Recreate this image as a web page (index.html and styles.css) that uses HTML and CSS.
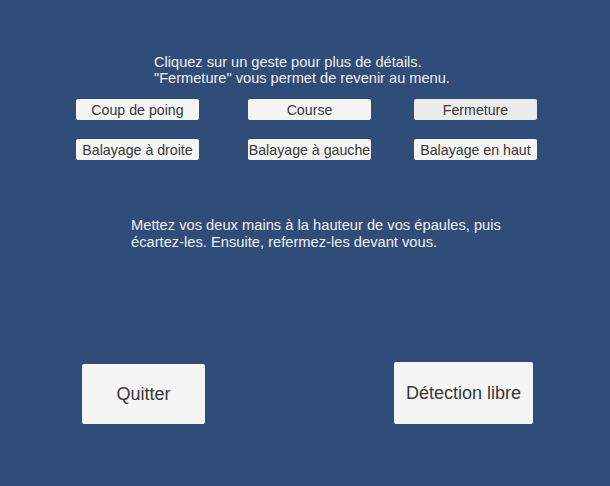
FILE: index.html
```html
<!DOCTYPE html>
<html lang="fr">
<head>
<meta charset="utf-8">
<title>Gestes</title>
<link rel="stylesheet" href="styles.css">
</head>
<body>
<div class="screen">
  <div class="intro">
    <div>Cliquez sur un geste pour plus de détails.</div>
    <div>"Fermeture" vous permet de revenir au menu.</div>
  </div>
  <div class="gestures">
    <button class="btn">Coup de poing</button>
    <button class="btn">Course</button>
    <button class="btn btn-active">Fermeture</button>
    <button class="btn">Balayage à droite</button>
    <button class="btn">Balayage à gauche</button>
    <button class="btn">Balayage en haut</button>
  </div>
  <p class="description">Mettez vos deux mains à la hauteur de vos épaules, puis<br>écartez-les. Ensuite, refermez-les devant vous.</p>
  <div class="actions">
    <button class="big-btn quit">Quitter</button>
    <button class="big-btn free">Détection libre</button>
  </div>
</div>
</body>
</html>
```
FILE: styles.css
```css
html, body {
  margin: 0;
  padding: 0;
}
body {
  background: #304d7a;
  font-family: "Liberation Sans", Arial, sans-serif;
}
.screen {
  width: 610px;
  height: 486px;
  overflow: hidden;
  background: #304d7a;
  color: #f0f0f0;
  padding-top: 54px;
  box-sizing: border-box;
}
.intro {
  margin-left: 154px;
  font-size: 14.6px;
  line-height: 16px;
}
.gestures {
  margin: 13px 0 0 76px;
  display: grid;
  grid-template-columns: 172px 166px 123px;
  grid-auto-rows: 21px;
  row-gap: 19px;
}
.btn {
  width: 123px;
  height: 21px;
  margin: 0;
  padding: 0;
  border: none;
  border-radius: 2px;
  background: #f5f5f5;
  color: #383838;
  font-family: "Liberation Sans", Arial, sans-serif;
  font-size: 14.2px;
  line-height: 22px;
  white-space: nowrap;
  text-align: center;
}
.btn-active {
  background: #ebebeb;
}
.description {
  margin: 57px 0 0 131px;
  font-size: 14.7px;
  line-height: 17px;
}
.actions {
  margin-top: 111px;
  display: flex;
  align-items: flex-end;
}
.big-btn {
  margin: 0;
  padding: 0;
  border: none;
  border-radius: 2px;
  background: #f5f5f5;
  color: #383838;
  font-family: "Liberation Sans", Arial, sans-serif;
  font-size: 18px;
}
.quit {
  width: 123px;
  height: 60px;
  margin-left: 82px;
}
.free {
  width: 139px;
  height: 62px;
  margin-left: 189px;
}
```
